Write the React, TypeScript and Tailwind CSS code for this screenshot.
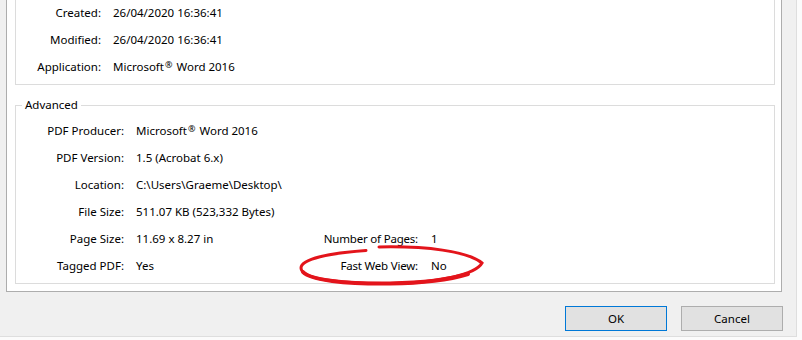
import React from "react";

type Row = { label: string; value: string; label2?: string; value2?: string };

const description: Row[] = [
  { label: "Created:", value: "26/04/2020 16:36:41" },
  { label: "Modified:", value: "26/04/2020 16:36:41" },
  { label: "Application:", value: "Microsoft® Word 2016" },
];

const advanced: Row[] = [
  { label: "PDF Producer:", value: "Microsoft® Word 2016" },
  { label: "PDF Version:", value: "1.5 (Acrobat 6.x)" },
  { label: "Location:", value: "C:\\Users\\Graeme\\Desktop\\" },
  { label: "File Size:", value: "511.07 KB (523,332 Bytes)" },
  { label: "Page Size:", value: "11.69 x 8.27 in", label2: "Number of Pages:", value2: "1" },
  { label: "Tagged PDF:", value: "Yes", label2: "Fast Web View:", value2: "No" },
];

function Value({ text }: { text: string }) {
  // draw the ® a little raised and smaller, as the dialog does
  const parts = text.split("®");
  if (parts.length === 1) return <>{text}</>;
  return (
    <>
      {parts[0]}
      <span className="relative -top-[3px] text-[9px] mx-[1px]">®</span>
      {parts[1]}
    </>
  );
}

function PropRow({ row, labelW }: { row: Row; labelW: string }) {
  return (
    <div className="flex items-center h-[27px] pb-[2px]">
      <div className={`${labelW} text-right shrink-0`}>{row.label}</div>
      <div className="ml-[12px] w-[180px] shrink-0 whitespace-nowrap">
        <Value text={row.value} />
      </div>
      {row.label2 && (
        <>
          <div className="w-[102px] text-right shrink-0 whitespace-nowrap tracking-[-0.2px]">{row.label2}</div>
          <div className="ml-[13px]">{row.value2}</div>
        </>
      )}
    </div>
  );
}

export default function App() {
  return (
    <div
      className="relative w-[802px] h-[340px] bg-[#fbfbfb] text-black text-[11.5px] overflow-hidden"
      style={{ fontFamily: '"Noto Sans", "Segoe UI", sans-serif' }}
    >
      <div className="w-[797px] h-[337px] bg-[#f0f0f0] border-r border-b border-[#dedede] flex flex-col">
        {/* tab page */}
        <div className="ml-[6px] w-[776px] bg-white border-x border-b border-[#adadad] pl-[8px] pr-[6px] pb-[7px]">
          <div className="border-x border-b border-[#dcdcdc] pl-[1px] pb-[3px]">
            {description.map((r) => (
              <PropRow key={r.label} row={r} labelW="w-[84px]" />
            ))}
          </div>

          <div className="relative mt-[20px] border border-[#dcdcdc] pt-[12px] pb-[3px] pl-[1px]">
            <div className="absolute -top-[9px] left-[6px] bg-white px-[3px] leading-[16px]">Advanced</div>
            {advanced.map((r) => (
              <PropRow key={r.label} row={r} labelW="w-[107px]" />
            ))}
          </div>
        </div>

        {/* buttons */}
        <div className="flex justify-end gap-[14px] mt-[14px] pr-[13px]">
          <button className="w-[102px] h-[25px] bg-[#e1e1e1] border border-[#0078d7]">OK</button>
          <button className="w-[102px] h-[25px] bg-[#e1e1e1] border border-[#adadad]">Cancel</button>
        </div>
      </div>

      {/* hand-drawn red highlight */}
      <svg className="absolute left-0 top-0 pointer-events-none" width="802" height="340" viewBox="0 0 802 340">
        <path
          d="M379,247 C425,246 468,251 482,263 C476,274 440,283 390,283.5 C340,284 301,279 301,268 C301,259 330,253 366,250.5"
          fill="none"
          stroke="#e3141b"
          strokeWidth="3"
          strokeLinecap="round"
          strokeLinejoin="miter"
        />
        <path
          d="M468,274 C445,281 420,283 390,283.5 C345,284 310,280 303,272"
          fill="none"
          stroke="#e3141b"
          strokeWidth="4"
          strokeLinecap="round"
        />
      </svg>
    </div>
  );
}
